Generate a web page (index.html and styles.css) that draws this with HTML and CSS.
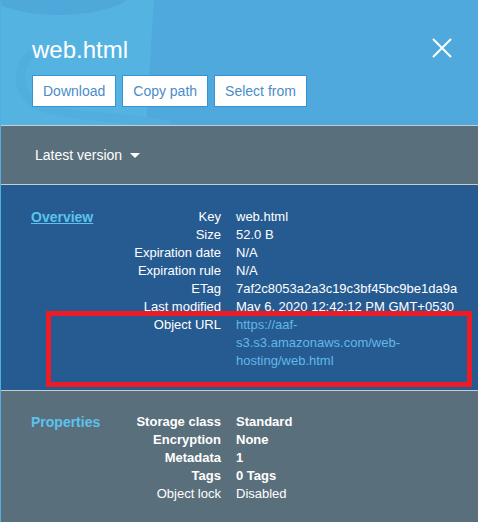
FILE: index.html
```html
<!DOCTYPE html>
<html>
<head>
<meta charset="utf-8">
<link rel="stylesheet" href="styles.css">
</head>
<body>
<div class="panel">
  <header class="header">
    <svg class="decor" width="170" height="125" viewBox="0 0 170 125">
      <path d="M0 0 H153 L145 125 H0 Z" fill="#55b3e2"/>
      <ellipse cx="58" cy="-12" rx="76" ry="27" fill="#4fa8da"/>
      <path d="M32 52 C12 70 14 100 50 110 C80 118 120 116 175 126" fill="none" stroke="#51aedf" stroke-width="9"/>
    </svg>
    <div class="top-row">
      <h1 class="title">web.html</h1>
      <button class="close" aria-label="Close">
        <svg width="20" height="20" viewBox="0 0 20 20"><path d="M1 1 L19 19 M19 1 L1 19" stroke="#fff" stroke-width="2" fill="none"/></svg>
      </button>
    </div>
    <div class="actions">
      <button class="btn">Download</button>
      <button class="btn">Copy path</button>
      <button class="btn">Select from</button>
    </div>
  </header>

  <div class="version-bar">
    <span class="version">Latest version</span>
    <span class="caret"></span>
  </div>

  <section class="section overview">
    <a class="section-title link" href="#">Overview</a>
    <div class="rows">
      <div class="label">Key</div><div class="value">web.html</div>
      <div class="label">Size</div><div class="value">52.0 B</div>
      <div class="label">Expiration date</div><div class="value">N/A</div>
      <div class="label">Expiration rule</div><div class="value">N/A</div>
      <div class="label">ETag</div><div class="value">7af2c8053a2a3c19c3bf45bc9be1da9a</div>
      <div class="label">Last modified</div><div class="value">May 6, 2020 12:42:12 PM GMT+0530</div>
      <div class="label">Object URL</div><div class="value url">https://aaf-<br>s3.s3.amazonaws.com/web-<br>hosting/web.html</div>
    </div>
    <div class="highlight"></div>
  </section>

  <section class="section properties">
    <div class="section-title">Properties</div>
    <div class="rows">
      <div class="label bold">Storage class</div><div class="value bold">Standard</div>
      <div class="label bold">Encryption</div><div class="value bold">None</div>
      <div class="label bold">Metadata</div><div class="value bold">1</div>
      <div class="label bold">Tags</div><div class="value bold">0 Tags</div>
      <div class="label">Object lock</div><div class="value">Disabled</div>
    </div>
  </section>
</div>
</body>
</html>
```

FILE: styles.css
```css
html, body {
  margin: 0;
  padding: 0;
}

body {
  width: 478px;
  height: 522px;
  overflow: hidden;
  background: #5a6f7c;
  font-family: "Liberation Sans", Arial, sans-serif;
  color: #fff;
}

.panel {
  border-left: 1px solid #52ade0;
  min-height: 522px;
  box-sizing: border-box;
  background: #5a6f7c;
}

.header {
  position: relative;
  height: 126px;
  box-sizing: border-box;
  background: #4fa9dc;
  border-bottom: 1px solid #c6cdd1;
  padding: 36px 26px 0 31px;
  overflow: hidden;
}

.decor {
  position: absolute;
  left: 0;
  top: 0;
}

.top-row {
  position: relative;
  display: flex;
  justify-content: space-between;
  align-items: flex-start;
}

.title {
  margin: 0;
  font-size: 24px;
  line-height: 28px;
  font-weight: normal;
  color: #fff;
}

.close {
  background: none;
  border: 0;
  padding: 0;
  margin-top: 2px;
  width: 20px;
  height: 20px;
  display: block;
}

.close svg {
  display: block;
}

.actions {
  position: relative;
  display: flex;
  gap: 6px;
  margin-top: 11px;
}

.btn {
  font-family: "Liberation Sans", Arial, sans-serif;
  font-size: 14px;
  line-height: 30px;
  height: 32px;
  padding: 0 10px;
  background: #fff;
  color: #4a8ccb;
  border: 1px solid #3593d6;
  border-radius: 0;
}

.version-bar {
  height: 59px;
  box-sizing: border-box;
  border-bottom: 1px solid #c6cdd1;
  background: #5a6f7c;
  display: flex;
  align-items: center;
  padding-left: 34px;
  gap: 8px;
}

.version {
  font-size: 14px;
  line-height: 18px;
}

.caret {
  width: 0;
  height: 0;
  border-left: 5px solid transparent;
  border-right: 5px solid transparent;
  border-top: 5px solid #fff;
  margin-top: 1px;
}

.section {
  position: relative;
  display: flex;
  padding-left: 30px;
  font-size: 13px;
  line-height: 18px;
}

.overview {
  background: #265b92;
  height: 206px;
  box-sizing: border-box;
  padding-top: 23px;
  border-bottom: 1px solid #c6cdd1;
}

.properties {
  padding-top: 22px;
}

.section-title {
  width: 70px;
  flex-shrink: 0;
  font-size: 14px;
  font-weight: bold;
  color: #5cc2ee;
}

.link {
  align-self: flex-start;
  text-decoration: underline;
}

.rows {
  display: grid;
  grid-template-columns: 120px 1fr;
  column-gap: 15px;
  align-content: start;
}

.label {
  text-align: right;
  white-space: nowrap;
}

.value {
  white-space: nowrap;
}

.url {
  color: #62b8e8;
}

.bold {
  font-weight: bold;
}

.highlight {
  position: absolute;
  left: 45px;
  top: 126px;
  width: 426px;
  height: 76px;
  box-sizing: border-box;
  border: 5px solid #ec1c27;
}
```
